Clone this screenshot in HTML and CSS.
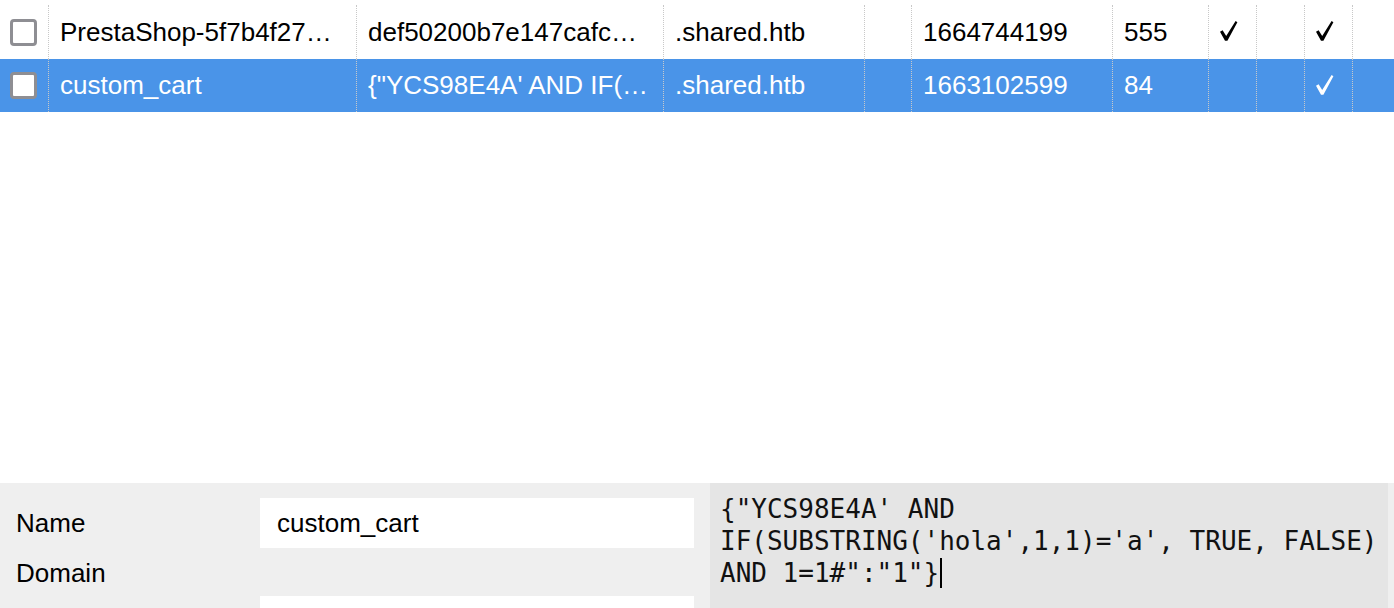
FILE: index.html
```html
<!DOCTYPE html>
<html>
<head>
<meta charset="utf-8">
<link rel="stylesheet" href="styles.css">
</head>
<body>
<div class="page">
  <div class="table">
    <div class="row">
      <div class="cell cb"><span class="box"></span></div>
      <div class="cell">PrestaShop-5f7b4f27…</div>
      <div class="cell">def50200b7e147cafc…</div>
      <div class="cell">.shared.htb</div>
      <div class="cell"></div>
      <div class="cell">1664744199</div>
      <div class="cell">555</div>
      <div class="cell chk"><svg class="tick" viewBox="0 0 18 20" width="18" height="20"><polygon points="0,10.8 2.6,9.2 6.2,15 15.6,0 17.4,1.2 7.4,19.8 5,19.8"/></svg></div>
      <div class="cell"></div>
      <div class="cell chk"><svg class="tick" viewBox="0 0 18 20" width="18" height="20"><polygon points="0,10.8 2.6,9.2 6.2,15 15.6,0 17.4,1.2 7.4,19.8 5,19.8"/></svg></div>
      <div class="cell"></div>
    </div>
    <div class="row sel">
      <div class="cell cb"><span class="box"></span></div>
      <div class="cell">custom_cart</div>
      <div class="cell">{"YCS98E4A' AND IF(…</div>
      <div class="cell">.shared.htb</div>
      <div class="cell"></div>
      <div class="cell">1663102599</div>
      <div class="cell">84</div>
      <div class="cell chk"></div>
      <div class="cell"></div>
      <div class="cell chk"><svg class="tick" viewBox="0 0 18 20" width="18" height="20"><polygon points="0,10.8 2.6,9.2 6.2,15 15.6,0 17.4,1.2 7.4,19.8 5,19.8"/></svg></div>
      <div class="cell"></div>
    </div>
  </div>
  <div class="spacer"></div>
  <div class="details">
    <div class="form">
      <div class="labels">
        <div class="label">Name</div>
        <div class="label">Domain</div>
      </div>
      <div class="inputs">
        <div class="input">custom_cart</div>
        <div class="input"></div>
      </div>
    </div>
    <div class="value">
      <div class="line">{"YCS98E4A' AND</div>
      <div class="line">IF(SUBSTRING('hola',1,1)='a', TRUE, FALSE)</div>
      <div class="line">AND 1=1#":"1"}<span class="caret"></span></div>
    </div>
    <div class="edge"></div>
  </div>
</div>
</body>
</html>
```

FILE: styles.css
```css
* { box-sizing: border-box; }
html, body { margin: 0; padding: 0; background: #fff; }
body {
  width: 1394px;
  height: 608px;
  overflow: hidden;
  font-family: "Liberation Sans", Arial, sans-serif;
  color: #000;
}
.page {
  display: flex;
  flex-direction: column;
  height: 608px;
}
.table {
  padding-top: 5px;
}
.row {
  display: grid;
  grid-template-columns: 48px 308px 307px 201px 47px 201px 96px 48px 48px 48px 48px 42px;
  height: 54px;
}
.row.sel {
  background: #4a94e8;
  color: #fff;
  height: 53px;
}
.cell {
  border-left: 1px dotted #c8c8c8;
  padding-left: 11px;
  font-size: 26px;
  line-height: 54px;
  white-space: nowrap;
  overflow: hidden;
}
.row.sel .cell { line-height: 53px; }
.cell.cb {
  border-left: none;
  padding-left: 10px;
  display: flex;
  align-items: center;
}
.box {
  width: 27px;
  height: 27px;
  border: 3px solid #8e8e93;
  border-radius: 4px;
  background: #fff;
}
.cell.chk {
  display: flex;
  align-items: center;
  padding-left: 11px;
  padding-bottom: 2px;
}
.tick { fill: #000; display: block; }
.row.sel .tick { fill: #fff; }
.spacer { flex: 1; }
.details {
  height: 125px;
  display: flex;
  background: #efefef;
}
.form {
  width: 710px;
  display: flex;
  padding: 15px 16px 0 16px;
}
.labels {
  width: 244px;
  display: flex;
  flex-direction: column;
}
.label {
  height: 50px;
  line-height: 50px;
  font-size: 26px;
}
.inputs {
  flex: 1;
  display: flex;
  flex-direction: column;
  gap: 48px;
}
.input {
  height: 50px;
  background: #fff;
  padding-left: 17px;
  line-height: 50px;
  font-size: 26px;
}
.value {
  width: 678px;
  background: #e5e5e5;
  padding: 10px 0 0 10px;
  font-family: "DejaVu Sans Mono", monospace;
  font-size: 26px;
  line-height: 32px;
  color: #111;
}
.line { white-space: pre; }
.caret {
  display: inline-block;
  width: 2px;
  height: 30px;
  background: #000;
  vertical-align: -6px;
  margin-left: 1px;
}
.edge {
  flex: 1;
  background: #efefef;
}
```
